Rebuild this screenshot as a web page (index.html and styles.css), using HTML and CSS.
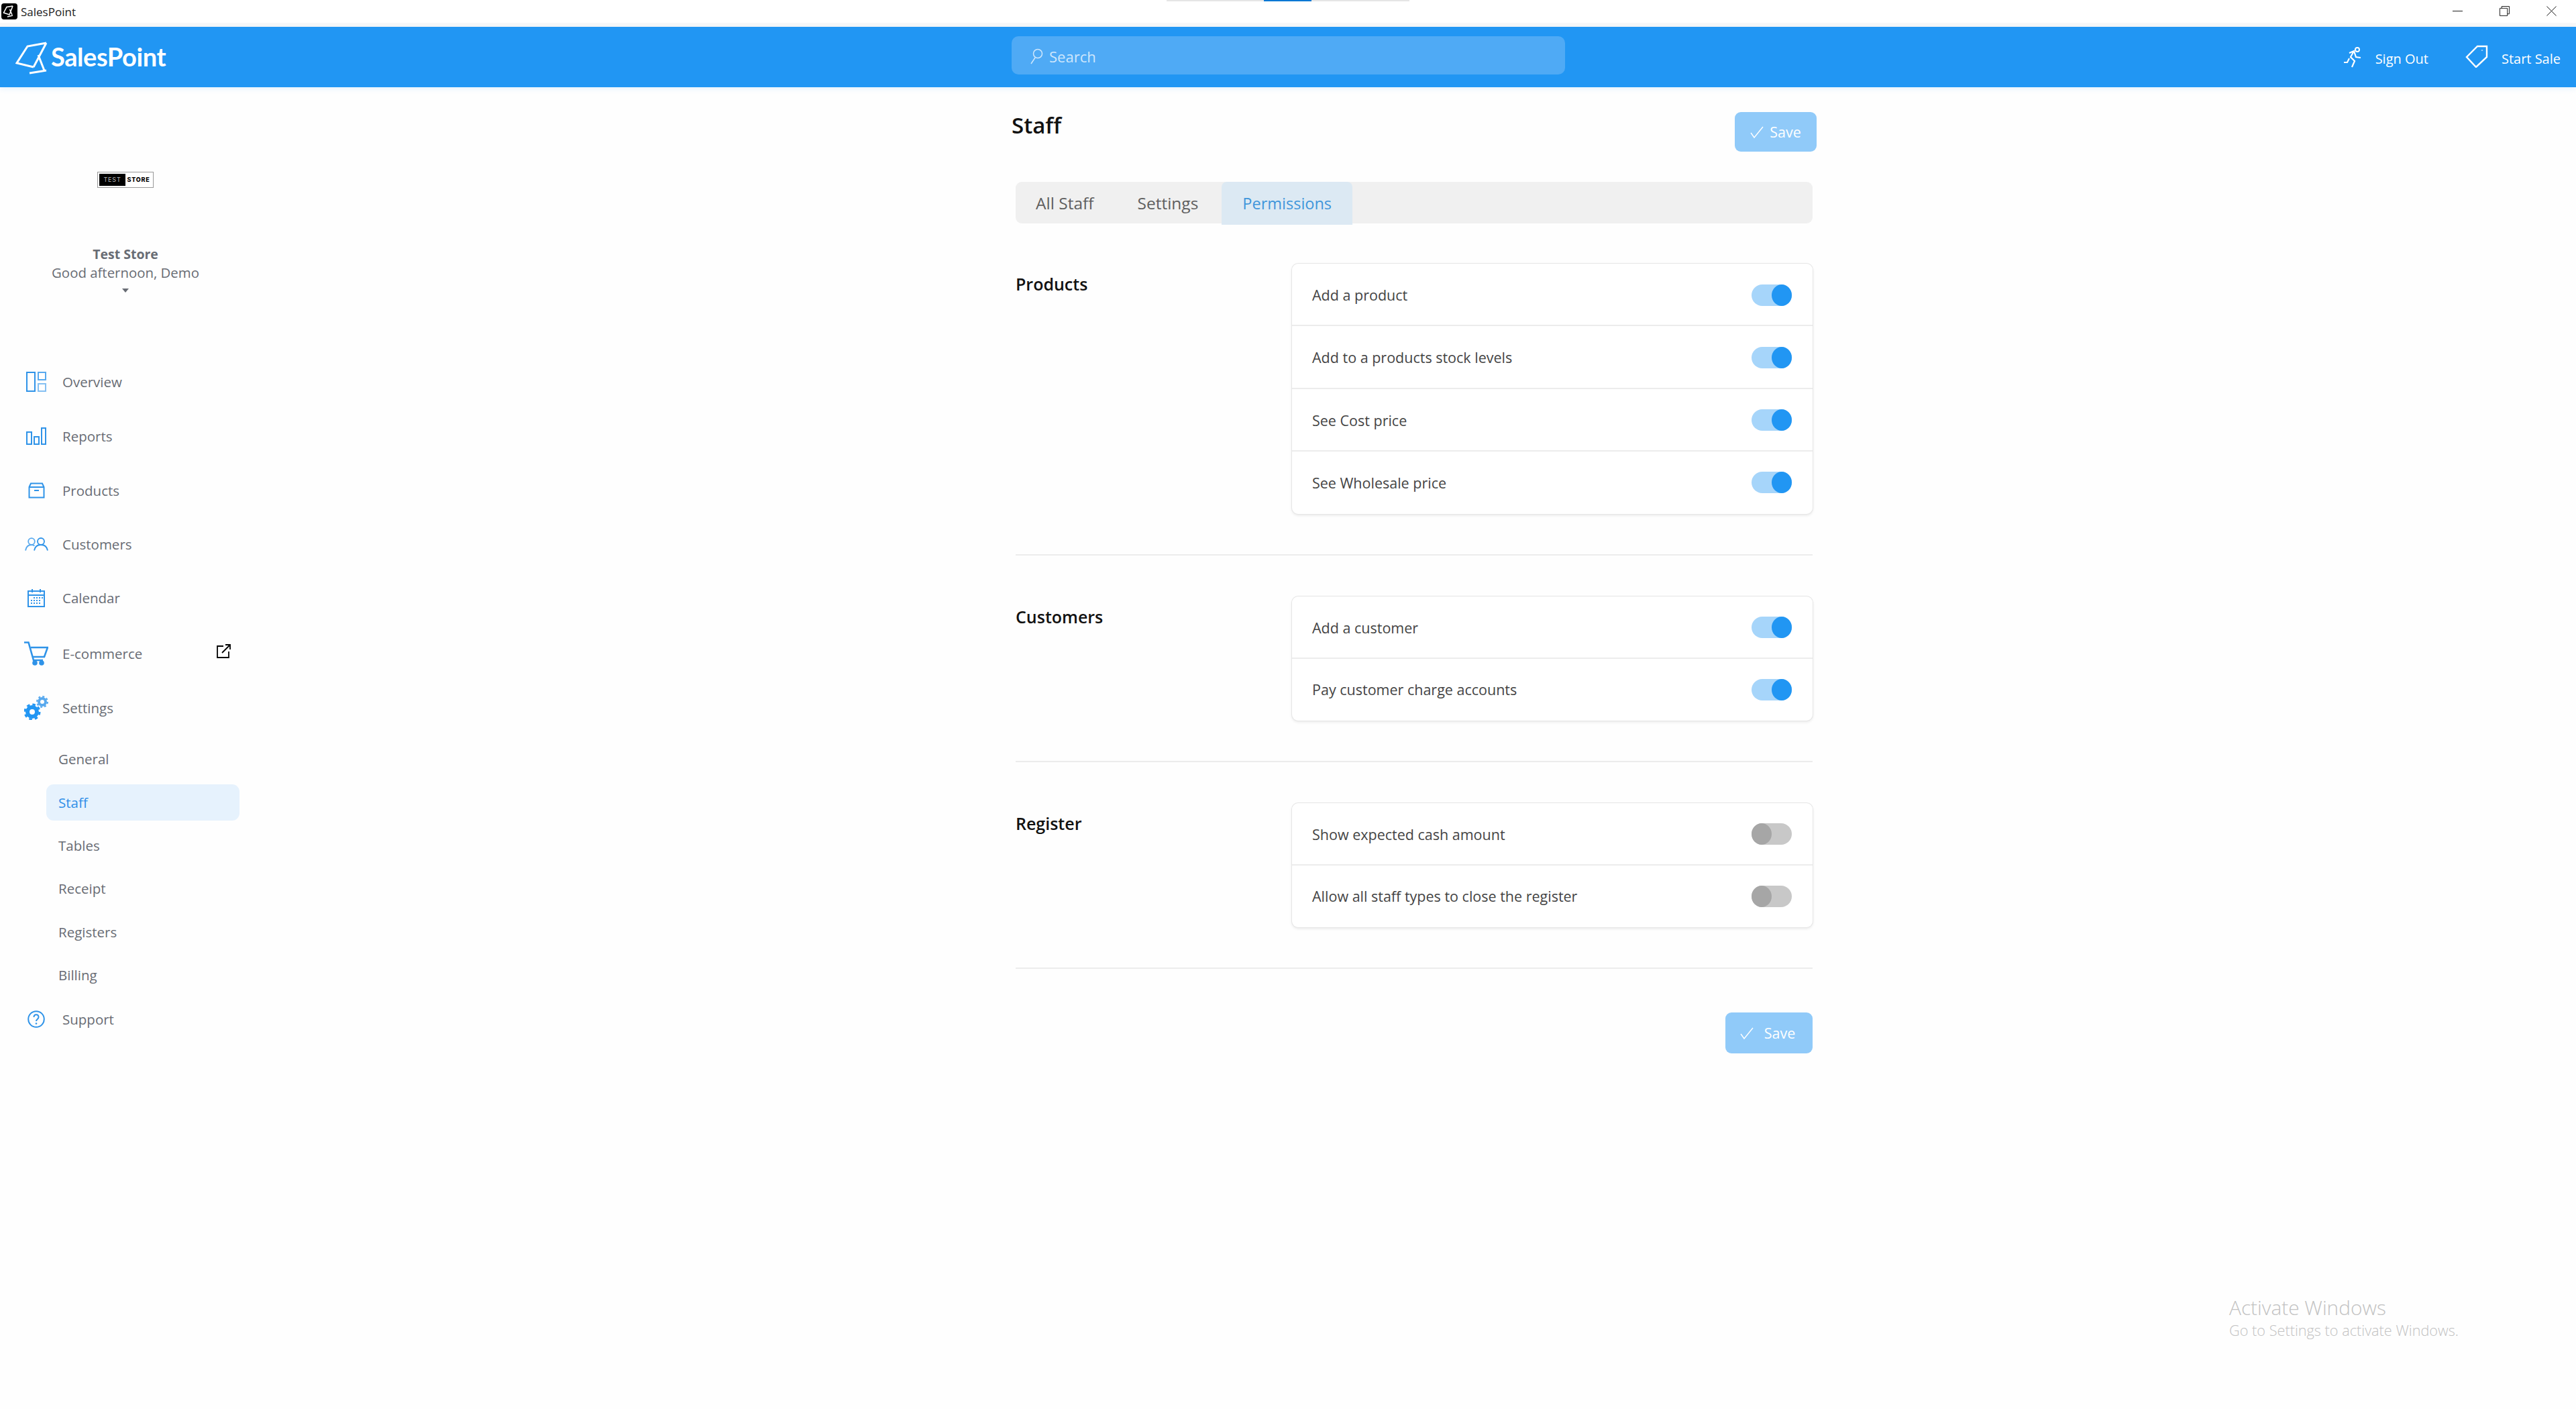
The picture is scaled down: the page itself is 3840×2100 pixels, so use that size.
FILE: index.html
```html
<!DOCTYPE html>
<html lang="en">
<head>
<meta charset="utf-8">
<title>SalesPoint</title>
<link rel="stylesheet" href="styles.css">
</head>
<body>
<div class="snap"><span class="snap-on"></span></div>
<div class="titlebar">
  <div class="app-title">
    <svg class="app-icon" viewBox="0 0 24 24"><rect width="24" height="24" rx="4" fill="#000"/><path d="M17 4 8 5.500 3.500 14l9 3M17 4l-5 13M12.500 9l3.500 8M9 20l8-2" fill="none" stroke="#fff" stroke-width="1.600"/></svg>
    <span>SalesPoint</span>
  </div>
  <div class="win-controls">
    <span class="win-btn"><svg viewBox="0 0 16 16" class="win-ic"><path d="M0 8h16" stroke="#111" fill="none"/></svg></span>
    <span class="win-btn"><svg viewBox="0 0 16 16" class="win-ic"><path d="M.5 3.500h12v12H.5zM3.500 3.500V.5h12v12h-3" stroke="#111" fill="none"/></svg></span>
    <span class="win-btn"><svg viewBox="0 0 16 16" class="win-ic"><path d="M.5.5l15 15M15.500.5l-15 15" stroke="#111" fill="none"/></svg></span>
  </div>
</div>
<header class="topbar">
  <div class="brand">
    <svg class="brand-icon" viewBox="0 0 48 49"><path d="M46 2 18 7 2 32l25 6M46 2 27 38M34 20l9 23M21 47l25-4" fill="none" stroke="#fff" stroke-width="3"/></svg>
    <span class="brand-name">SalesPoint</span>
  </div>
  <div class="search">
    <svg class="search-ic" viewBox="0 0 20 24"><circle cx="12" cy="8" r="6.500" fill="none" stroke="#cfe7fc" stroke-width="1.500"/><path d="M8 14 2 23" stroke="#cfe7fc" stroke-width="1.500"/></svg>
    <span>Search</span>
  </div>
  <div class="top-actions">
    <span class="top-action">
      <svg class="top-ic run-ic" viewBox="0 0 28 34"><circle cx="21" cy="5" r="3" fill="none" stroke="#fff" stroke-width="2"/><path d="M9 10l7-3 3 9 7 1M16 7l-5 9 6 6-4 9M9 18l-3 6H1" fill="none" stroke="#fff" stroke-width="2.200"/></svg>
      <span>Sign Out</span>
    </span>
    <span class="top-action">
      <svg class="top-ic" viewBox="0 0 34 34"><path d="M32 2v16L16 33 2 18 18 2zM25 7.500v1" fill="none" stroke="#fff" stroke-width="2.400"/></svg>
      <span>Start Sale</span>
    </span>
  </div>
</header>
<div class="main">
  <aside class="sidebar">
    <div class="store">
      <div class="store-logo"><span class="sl-a">TEST</span><span class="sl-b">STORE</span></div>
      <div class="store-name">Test Store</div>
      <div class="store-greet">Good afternoon, Demo</div>
      <span class="caret"></span>
    </div>
    <nav class="nav">
      <a class="nav-item h81"><span class="nav-ic"><svg width="30" height="30" viewBox="0 0 30 30"><path d="M1 1h12v28H1z" fill="none" stroke="#2f93e8" stroke-width="2"/><path d="M18 1h11v11H18z" fill="none" stroke="#58a9ee" stroke-width="2"/><path d="M18 18h11v11H18z" fill="none" stroke="#85c0f2" stroke-width="2"/></svg></span>Overview</a>
      <a class="nav-item h81"><span class="nav-ic"><svg width="30" height="26" viewBox="0 0 30 26"><path d="M1 7h7v18H1zM12 14h7v11h-7zM23 1h6v24h-6z" fill="none" stroke="#2f93e8" stroke-width="2"/></svg></span>Reports</a>
      <a class="nav-item h82"><span class="nav-ic"><svg width="25" height="24" viewBox="0 0 25 24"><path d="M1.500 7 4 1.500h17L23.500 7v15.500h-22zM1.500 7h22M9 12h7" fill="none" stroke="#2f93e8" stroke-width="2"/></svg></span>Products</a>
      <a class="nav-item h77"><span class="nav-ic"><svg width="35" height="20" viewBox="0 0 35 20"><circle cx="10" cy="6" r="4.800" fill="none" stroke="#58a9ee" stroke-width="1.800"/><path d="M1 19.500c1-6 4-8.500 9-8.500 2 0 3 .5 4.500 1.500" fill="none" stroke="#58a9ee" stroke-width="1.800"/><circle cx="24" cy="6" r="5" fill="none" stroke="#2f93e8" stroke-width="1.800"/><path d="M14 19.500c1-6 5-8.500 10-8.500s9 2.500 10 8.500" fill="none" stroke="#2f93e8" stroke-width="1.800"/></svg></span>Customers</a>
      <a class="nav-item h84"><span class="nav-ic"><svg width="26" height="27" viewBox="0 0 26 27"><path d="M1 3h24v23H1zM1 9h24M7 0v5M19 0v5" fill="none" stroke="#2f93e8" stroke-width="2"/><path d="M9 12h2v2H9zM13 12h2v2h-2zM17 12h2v2h-2zM21 12h2v2h-2zM5 16h2v2H5zM9 16h2v2H9zM13 16h2v2h-2zM17 16h2v2h-2zM5 20h2v2H5zM9 20h2v2H9zM13 20h2v2h-2zM17 20h2v2h-2z" fill="#2f93e8"/></svg></span>Calendar</a>
      <a class="nav-item h81 nav-shop"><span class="nav-ic"><svg width="36" height="36" viewBox="0 0 36 36"><path d="M0 1.500h6.500L14 28h14M10 9h25l-5 14H13" fill="none" stroke="#2f93e8" stroke-width="2.600"/><circle cx="16" cy="32" r="3.800" fill="#2f93e8"/><circle cx="26" cy="32" r="3.800" fill="#2f93e8"/></svg></span>E-commerce
        <svg class="ext" width="21" height="21" viewBox="0 0 21 21"><path d="M10 3H1v17h17v-9M8 13 20 1M13 1h7v7" fill="none" stroke="#000" stroke-width="1.800"/></svg></a>
      <a class="nav-item h81"><span class="nav-ic"><svg width="36" height="36" viewBox="0 0 36 36"><circle cx="12" cy="24" r="7" fill="none" stroke="#2196f3" stroke-width="6"/><circle cx="12" cy="24" r="11" fill="none" stroke="#2196f3" stroke-width="3" stroke-dasharray="4.600 4.040"/><circle cx="27" cy="9" r="5" fill="none" stroke="#58a9ee" stroke-width="4"/><circle cx="27" cy="9" r="7.900" fill="none" stroke="#58a9ee" stroke-width="2.200" stroke-dasharray="3.100 3.100"/></svg></span>Settings</a>
    </nav>
    <div class="subnav">
      <a class="sub-item">General</a>
      <a class="sub-item sub-active">Staff</a>
      <a class="sub-item">Tables</a>
      <a class="sub-item">Receipt</a>
      <a class="sub-item">Registers</a>
      <a class="sub-item">Billing</a>
    </div>
    <a class="nav-item support"><span class="nav-ic"><svg width="26" height="26" viewBox="0 0 26 26"><circle cx="13" cy="13" r="11.800" fill="none" stroke="#2f93e8" stroke-width="2"/><path d="M9.500 10c0-5 7-5 7 0 0 3-3.500 3-3.500 6" fill="none" stroke="#2f93e8" stroke-width="2"/><circle cx="13" cy="19.500" r="1.300" fill="#2f93e8"/></svg></span>Support</a>
  </aside>
  <main class="content">
    <div class="title-row">
      <h1 class="page-title">Staff</h1>
      <button class="btn btn-top"><svg class="check" viewBox="0 0 20 20"><path d="M1 11l5 7L19 2" fill="none" stroke="#fff" stroke-width="1.400"/></svg>Save</button>
    </div>
    <div class="inner">
      <div class="tabs">
        <span class="tab">All Staff</span>
        <span class="tab">Settings</span>
        <span class="tab tab-active">Permissions</span>
      </div>
      <section class="perm-section first">
        <h2 class="perm-label">Products</h2>
        <div class="card">
          <div class="row"><span>Add a product</span><span class="toggle on"></span></div>
          <div class="row"><span>Add to a products stock levels</span><span class="toggle on"></span></div>
          <div class="row"><span>See Cost price</span><span class="toggle on"></span></div>
          <div class="row"><span>See Wholesale price</span><span class="toggle on"></span></div>
        </div>
      </section>
      <section class="perm-section">
        <h2 class="perm-label">Customers</h2>
        <div class="card">
          <div class="row"><span>Add a customer</span><span class="toggle on"></span></div>
          <div class="row"><span>Pay customer charge accounts</span><span class="toggle on"></span></div>
        </div>
      </section>
      <section class="perm-section">
        <h2 class="perm-label">Register</h2>
        <div class="card">
          <div class="row"><span>Show expected cash amount</span><span class="toggle"></span></div>
          <div class="row"><span>Allow all staff types to close the register</span><span class="toggle"></span></div>
        </div>
      </section>
      <div class="footer-row">
        <button class="btn btn-bottom"><svg class="check" viewBox="0 0 20 20"><path d="M1 11l5 7L19 2" fill="none" stroke="#fff" stroke-width="1.400"/></svg>Save</button>
      </div>
    </div>
  </main>
</div>
<div class="activate">
  <div class="act-a">Activate Windows</div>
  <div class="act-b">Go to Settings to activate Windows.</div>
</div>
</body>
</html>
```

FILE: styles.css
```css
* { box-sizing: border-box; }
html, body { margin: 0; height: 100%; }
body {
  background: #fefefe;
  font-family: "Open Sans", "Noto Sans", sans-serif;
  color: #444;
  overflow: hidden;
  position: relative;
}
.snap {
  position: absolute; left: 1739px; top: 0; width: 362px; height: 2px;
  background: #e5e5e5;
}
.snap-on { position: absolute; left: 145px; top: 0; width: 71px; height: 2px; background: #0078d4; }
.titlebar {
  height: 40px; display: flex; justify-content: space-between; align-items: flex-start;
  background: #fff; border-bottom: 6px solid #f8f8f8;
}
.app-title { display: flex; align-items: center; height: 34px; padding-left: 2px; gap: 5px; font-size: 17px; color: #222; }
.app-icon { width: 24px; height: 24px; }
.win-controls { display: flex; padding-right: 2px; }
.win-btn { width: 70px; height: 34px; display: flex; align-items: center; justify-content: center; }
.win-ic { width: 15px; height: 15px; margin-top: -1px; }
.topbar {
  height: 90px; background: #2196f3; color: #fff; display: flex; align-items: center;
  position: relative; box-shadow: 0 2px 8px rgba(33,150,243,.12);
}
.brand { display: flex; align-items: center; width: 1508px; padding-left: 23px; gap: 5px; }
.brand-icon { width: 48px; height: 49px; margin-top: 2px; }
.brand-name { font-family: "Lato", sans-serif; font-size: 38px; font-weight: 700; letter-spacing: -.4px; margin-top: -2px; }
.search {
  width: 825px; height: 57px; margin-top: -5px; border-radius: 10px; background: #4faaf5;
  color: #cfe7fc; display: flex; align-items: center; padding: 2px 0 0 27px; gap: 9px; font-size: 22px;
}
.search-ic { width: 20px; height: 24px; }
.top-actions { margin-left: auto; display: flex; align-items: center; gap: 55px; padding-right: 23px; font-size: 20px; margin-top: 4px; }
.top-action { display: flex; align-items: center; gap: 20px; }
.top-ic { height: 34px; width: auto; margin-top: -6px; }
.run-ic { margin-top: -3px; }
.main { display: flex; }
.sidebar { flex: 0 0 376px; font-size: 20.500px; color: #686c74; font-weight: 500; }
.store { height: 398px; padding-top: 126px; text-align: center; width: 374px; }
.store-logo {
  width: 84px; height: 24px; margin: 0 auto; border: 1px solid #999; background: #fff; display: flex; padding: 2px;
  font: 800 9px/18px "Inter", sans-serif; letter-spacing: .8px; color: #000;
}
.sl-a { background: #000; color: #bbb; width: 39px; font-weight: 400; }
.sl-b { flex: 1; }
.store-name { margin-top: 85px; font-weight: 700; line-height: 28px; font-size: 19.500px; }
.store-greet { line-height: 26px; font-size: 20.400px; font-weight: 400; }
.caret { display: block; width: 0; height: 0; margin: 11px auto 0; border: 5.500px solid transparent; border-top: 6px solid #686c74; border-bottom: 0; }
.nav-item { display: flex; align-items: center; height: 81px; position: relative; }
.nav-ic { width: 36px; margin: 0 21px 0 36px; flex: none; display: flex; align-items: center; justify-content: center; }
.h81 { height: 81px; } .h82 { height: 82px; } .h77 { height: 77px; } .h84 { height: 84px; }
.ext { position: absolute; left: 323px; top: 27px; }
.subnav { display: flex; flex-direction: column; margin-top: 4px; }
.sub-item { height: 54px; margin: 5.200px 0 5.200px 69px; width: 288px; padding-left: 18px; display: flex; align-items: center; border-radius: 11px; }
.sub-active { background: #e6f2fd; color: #2f8fe8; }
.support { margin-top: 4px; height: 60px; }
.content { flex: 0 0 1200px; margin-left: 1132px; padding-top: 37px; }
.title-row { display: flex; justify-content: space-between; align-items: flex-start; height: 59px; }
.page-title { margin: 0; font-size: 33px; font-weight: 600; color: #111; line-height: 40px; }
.btn {
  background: #90caf9; color: #fff; border: 0; border-radius: 9px; font: inherit; font-size: 21.500px;
  display: flex; align-items: center; justify-content: center; padding: 0;
}
.check { width: 20px; height: 20px; }
.btn-top { width: 122px; height: 59px; gap: 9px; }
.btn-bottom { width: 130px; height: 61px; gap: 16px; padding-right: 4px; }
.inner { margin-left: 6px; width: 1188px; padding-top: 45px; }
.tabs { height: 62px; border-radius: 9px; background: #f0f0f0; display: flex; font-size: 24.500px; color: #5f5f5f; }
.tab { padding: 0 35px 0 30px; height: 100%; line-height: 64px; }
.tab-active { padding: 0 31px; height: 64px; background: #dce9f3; color: #3f96db; border-radius: 8px 8px 0 0; font-size: 23.500px; }
.perm-section { display: flex; padding: 61px 0 60px; border-bottom: 2px solid #ececec; }
.perm-section.first { padding-top: 60px; }
.perm-label { flex: 0 0 412px; margin: 15px 0 0; font-size: 25px; font-weight: 600; color: #111; line-height: 30px; }
.card { flex: 1; border-radius: 9px; background: #fff; box-shadow: 0 0 0 1px #e6e6e6, 0 2px 4px rgba(0,0,0,.1); }
.row { height: 92.500px; display: flex; align-items: center; justify-content: space-between; padding: 2px 31px 0 30px; font-size: 21.500px; color: #444; border-bottom: 2px solid #ececec; }
.first .row { height: 93.250px; }
.row:last-child { border-bottom: 0; padding-top: 0; }
.toggle { position: relative; width: 60px; height: 32px; border-radius: 16px; background: #c8c8c8; }
.toggle::after { content: ""; position: absolute; left: 0; top: 0; width: 30px; height: 32px; border-radius: 50%; background: #a6a6a6; }
.toggle.on { background: #a6d5fa; }
.toggle.on::after { left: 30px; background: #2196f3; }
.footer-row { display: flex; justify-content: flex-end; padding-top: 65px; }
.activate { position: absolute; left: 3323px; top: 1931px; color: #c2c2c2; }
.act-a { font-size: 29.800px; line-height: 36px; font-weight: 300; }
.act-b { font-size: 21.700px; line-height: 32px; font-weight: 300; }
```
